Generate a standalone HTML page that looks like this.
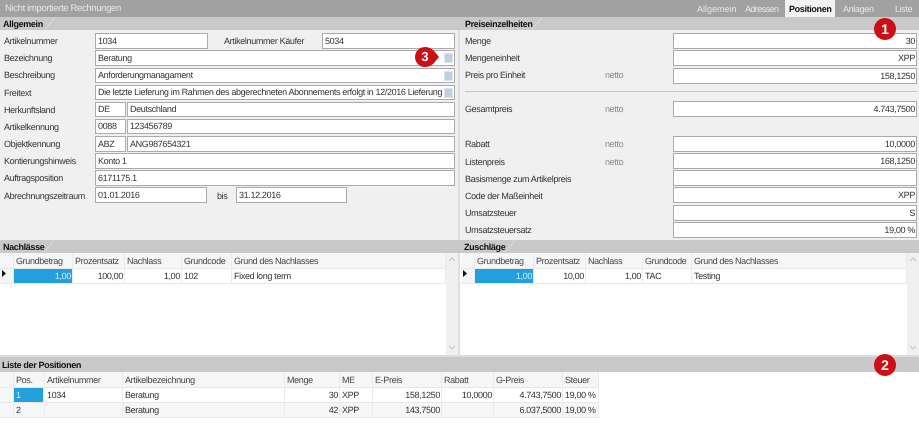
<!DOCTYPE html>
<html lang="de"><head><meta charset="utf-8"><title>Positionen</title>
<style>
html,body{margin:0;padding:0;background:#fff}
#p{position:relative;width:919px;height:428px;overflow:hidden;background:#fff;font:9px/14px "Liberation Sans",sans-serif;letter-spacing:-.35px;color:#333;filter:blur(.35px);text-rendering:geometricPrecision}
#p div{position:absolute;white-space:nowrap;box-sizing:border-box}
.bar{background:#c9c9c9}
.h{font-weight:bold;color:#111;height:14px;line-height:14px}
.l{height:14px;line-height:14px;color:#333}
.n{height:14px;line-height:14px;color:#888}
.f{height:16px;background:#fff;border:1px solid #aaa;line-height:14px;padding:0 1px 0 2px;color:#333}
.f.q{height:15px;line-height:13px}
.r{text-align:right}
.t{color:#e8e8e8;line-height:16px;height:16px}
.c{height:15px;line-height:15px;padding:0 2px;border-right:1px solid #eaeaea;border-bottom:1px solid #e8e8e8;overflow:hidden}
.c.r{padding-right:1px}
.g{background:#f5f6f7;color:#444;height:16px;line-height:17px}
.x{background:#f5f6f7}
.s{background:#229fdc;color:#d8eefa}
.b{background:#cc0f14;border-radius:50%;color:#fff;font-weight:bold;text-align:center;letter-spacing:0}
.ic{width:9px;height:10px;background:#bcd0e6;border:1px solid #e0e4e8}
</style></head><body><div id="p">
<div style="left:0;top:0;width:919px;height:17px;background:#a1a1a1"></div>
<div class="t" style="left:5px;top:1px;font-size:9.5px">Nicht importierte Rechnungen</div>
<div class="t" style="left:697px;top:1px;letter-spacing:0">Allgemein</div>
<div class="t" style="left:745px;top:1px;letter-spacing:-.6px">Adressen</div>
<div style="left:785px;top:0;width:50px;height:17px;background:#f2f2f2"></div>
<div class="t" style="left:789px;top:1px;color:#111;font-weight:bold">Positionen</div>
<div class="t" style="left:843px;top:1px">Anlagen</div>
<div class="t" style="left:895px;top:1px">Liste</div>

<div style="left:0;top:29px;width:919px;height:211px;background:#f0f0f0"></div>
<div style="left:458px;top:29px;width:2px;height:326px;background:#dedede"></div>
<div class="bar" style="left:0;top:17px;width:919px;height:13px"></div>
<div class="h" style="left:3px;top:17px">Allgemein</div>
<div class="h" style="left:465px;top:17px">Preiseinzelheiten</div>

<div class="l" style="left:4px;top:34px">Artikelnummer</div>
<div class="f" style="left:95px;top:33px;width:113px">1034</div>
<div class="l" style="left:224px;top:34px">Artikelnummer Käufer</div>
<div class="f" style="left:322px;top:33px;width:133px">5034</div>
<div class="l" style="left:4px;top:51px">Bezeichnung</div>
<div class="f" style="left:95px;top:50px;width:360px">Beratung</div>
<div class="l" style="left:4px;top:68px">Beschreibung</div>
<div class="f q" style="left:95px;top:68px;width:360px">Anforderungmanagament</div>
<div class="l" style="left:4px;top:86px">Freitext</div>
<div class="f q" style="left:95px;top:85px;width:360px">Die letzte Lieferung im Rahmen des abgerechneten Abonnements erfolgt in 12/2016 Lieferung</div>
<div class="ic" style="left:444px;top:53px"></div>
<div class="ic" style="left:444px;top:71px"></div>
<div class="ic" style="left:444px;top:88px"></div>
<div class="l" style="left:4px;top:103px">Herkunftsland</div>
<div class="f q" style="left:95px;top:102px;width:31px">DE</div>
<div class="f q" style="left:127px;top:102px;width:328px">Deutschland</div>
<div class="l" style="left:4px;top:120px">Artikelkennung</div>
<div class="f q" style="left:95px;top:119px;width:31px">0088</div>
<div class="f q" style="left:127px;top:119px;width:328px">123456789</div>
<div class="l" style="left:4px;top:137px">Objektkennung</div>
<div class="f" style="left:95px;top:136px;width:31px">ABZ</div>
<div class="f" style="left:127px;top:136px;width:328px">ANG987654321</div>
<div class="l" style="left:4px;top:154px">Kontierungshinweis</div>
<div class="f" style="left:95px;top:153px;width:360px">Konto 1</div>
<div class="l" style="left:4px;top:171px">Auftragsposition</div>
<div class="f" style="left:95px;top:170px;width:360px">6171175.1</div>
<div class="l" style="left:4px;top:189px">Abrechnungszeitraum</div>
<div class="f" style="left:95px;top:187px;width:112px">01.01.2016</div>
<div class="l" style="left:217px;top:189px">bis</div>
<div class="f" style="left:236px;top:187px;width:111px">31.12.2016</div>

<div class="l" style="left:465px;top:34px">Menge</div>
<div class="f r" style="left:673px;top:33px;width:244px">30</div>
<div class="l" style="left:465px;top:51px">Mengeneinheit</div>
<div class="f r" style="left:673px;top:50px;width:244px">XPP</div>
<div class="l" style="left:465px;top:68px">Preis pro Einheit</div>
<div class="n" style="left:605px;top:68px">netto</div>
<div class="f r" style="left:673px;top:68px;width:244px">158,1250</div>
<div style="left:465px;top:91px;width:452px;height:1px;background:#c4c4c4"></div>
<div class="l" style="left:465px;top:102px">Gesamtpreis</div>
<div class="n" style="left:605px;top:102px">netto</div>
<div class="f r" style="left:673px;top:101px;width:244px">4.743,7500</div>
<div class="l" style="left:465px;top:137px">Rabatt</div>
<div class="n" style="left:605px;top:137px">netto</div>
<div class="f r" style="left:673px;top:136px;width:244px">10,0000</div>
<div class="l" style="left:465px;top:155px">Listenpreis</div>
<div class="n" style="left:605px;top:155px">netto</div>
<div class="f r" style="left:673px;top:153px;width:244px">168,1250</div>
<div class="l" style="left:465px;top:172px">Basismenge zum Artikelpreis</div>
<div class="f r" style="left:673px;top:170px;width:244px"></div>
<div class="l" style="left:465px;top:189px">Code der Maßeinheit</div>
<div class="f r" style="left:673px;top:187px;width:244px">XPP</div>
<div class="l" style="left:465px;top:206px">Umsatzsteuer</div>
<div class="f r" style="left:673px;top:205px;width:244px">S</div>
<div class="l" style="left:465px;top:223px">Umsatzsteuersatz</div>
<div class="f r" style="left:673px;top:222px;width:244px">19,00 %</div>

<div class="bar" style="left:0;top:240px;width:919px;height:13px"></div>
<div class="h" style="left:3px;top:240px">Nachlässe</div>
<div class="h" style="left:464px;top:240px">Zuschläge</div>

<div class="c g" style="left:0;top:253px;width:14px"></div>
<div class="c g" style="left:14px;top:253px;width:59px">Grundbetrag</div>
<div class="c g" style="left:73px;top:253px;width:52px">Prozentsatz</div>
<div class="c g" style="left:125px;top:253px;width:57px">Nachlass</div>
<div class="c g" style="left:182px;top:253px;width:50px">Grundcode</div>
<div class="c g" style="left:232px;top:253px;width:214px">Grund des Nachlasses</div>
<div class="c x" style="left:0;top:269px;width:14px"></div>
<div class="c s r" style="left:14px;top:269px;width:59px">1,00</div>
<div class="c r" style="left:73px;top:269px;width:52px">100,00</div>
<div class="c r" style="left:125px;top:269px;width:57px">1,00</div>
<div class="c" style="left:182px;top:269px;width:50px">102</div>
<div class="c" style="left:232px;top:269px;width:214px">Fixed long term</div>
<div style="left:446px;top:253px;width:12px;height:102px;background:#f0f0f0"></div>

<div class="c g" style="left:461px;top:253px;width:14px"></div>
<div class="c g" style="left:475px;top:253px;width:59px">Grundbetrag</div>
<div class="c g" style="left:534px;top:253px;width:52px">Prozentsatz</div>
<div class="c g" style="left:586px;top:253px;width:57px">Nachlass</div>
<div class="c g" style="left:643px;top:253px;width:49px">Grundcode</div>
<div class="c g" style="left:692px;top:253px;width:215px">Grund des Nachlasses</div>
<div class="c x" style="left:461px;top:269px;width:14px"></div>
<div class="c s r" style="left:475px;top:269px;width:59px">1,00</div>
<div class="c r" style="left:534px;top:269px;width:52px">10,00</div>
<div class="c r" style="left:586px;top:269px;width:57px">1,00</div>
<div class="c" style="left:643px;top:269px;width:49px">TAC</div>
<div class="c" style="left:692px;top:269px;width:215px">Testing</div>
<div style="left:907px;top:253px;width:12px;height:102px;background:#f0f0f0"></div>

<svg style="position:absolute;left:0;top:0" width="919" height="428">
<g fill="none" stroke="#dadada"><path d="M45 29.5 L55 17.5"/><path d="M532 29.5 L542 17.5"/><path d="M44 252.5 L54 240.5"/><path d="M505 252.5 L515 240.5"/></g>
<g fill="none" stroke="#c4c4c4"><path d="M449 261l3-3 3 3"/><path d="M449 346l3 3 3-3"/><path d="M910 261l3-3 3 3"/><path d="M910 346l3 3 3-3"/></g>
<g fill="#111"><path d="M2 270v7l4-3.5z"/><path d="M463 270v7l4-3.5z"/><path d="M2 389v7l4-3.5z"/></g>
</svg>

<div style="left:0;top:355px;width:919px;height:2px;background:#dcdcdc"></div>
<div class="bar" style="left:0;top:357px;width:919px;height:15px"></div>
<div class="h" style="left:2px;top:358px">Liste der Positionen</div>

<div class="c g" style="left:0;top:372px;width:14px"></div>
<div class="c g" style="left:14px;top:372px;width:31px">Pos.</div>
<div class="c g" style="left:45px;top:372px;width:78px">Artikelnummer</div>
<div class="c g" style="left:123px;top:372px;width:162px">Artikelbezeichnung</div>
<div class="c g" style="left:285px;top:372px;width:55px">Menge</div>
<div class="c g" style="left:340px;top:372px;width:33px">ME</div>
<div class="c g" style="left:373px;top:372px;width:69px">E-Preis</div>
<div class="c g" style="left:442px;top:372px;width:52px">Rabatt</div>
<div class="c g" style="left:494px;top:372px;width:69px">G-Preis</div>
<div class="c g" style="left:563px;top:372px;width:36px">Steuer</div>

<div class="c x" style="left:0;top:388px;width:14px"></div>
<div class="c s" style="left:14px;top:388px;width:30px">1</div>
<div class="c" style="left:45px;top:388px;width:78px">1034</div>
<div class="c" style="left:123px;top:388px;width:162px">Beratung</div>
<div class="c r" style="left:285px;top:388px;width:55px">30</div>
<div class="c" style="left:340px;top:388px;width:33px">XPP</div>
<div class="c r" style="left:373px;top:388px;width:69px">158,1250</div>
<div class="c r" style="left:442px;top:388px;width:52px">10,0000</div>
<div class="c r" style="left:494px;top:388px;width:69px">4.743,7500</div>
<div class="c" style="left:563px;top:388px;width:36px">19,00 %</div>

<div class="c x" style="left:0;top:403px;width:14px"></div>
<div class="c x" style="left:14px;top:403px;width:31px">2</div>
<div class="c x" style="left:45px;top:403px;width:78px"></div>
<div class="c x" style="left:123px;top:403px;width:162px">Beratung</div>
<div class="c x r" style="left:285px;top:403px;width:55px">42</div>
<div class="c x" style="left:340px;top:403px;width:33px">XPP</div>
<div class="c x r" style="left:373px;top:403px;width:69px">143,7500</div>
<div class="c x r" style="left:442px;top:403px;width:52px"></div>
<div class="c x r" style="left:494px;top:403px;width:69px">6.037,5000</div>
<div class="c x" style="left:563px;top:403px;width:36px">19,00 %</div>

<div class="b" style="left:874px;top:18px;width:22px;height:22px;line-height:22px;font-size:14px">1</div>
<div class="b" style="left:874px;top:354px;width:22px;height:22px;line-height:22px;font-size:14px">2</div>
<svg style="position:absolute;left:415px;top:46px" width="26" height="22"><path d="M10 1 C14 1 17 3 19 5 L24 11 L19 17 C17 19 14 21 10 21 A10 10 0 0 1 10 1Z" fill="#cc0f14"/></svg>
<div class="b" style="left:415px;top:47px;width:20px;height:20px;line-height:20px;font-size:13px;background:none">3</div>
</div></body></html>
